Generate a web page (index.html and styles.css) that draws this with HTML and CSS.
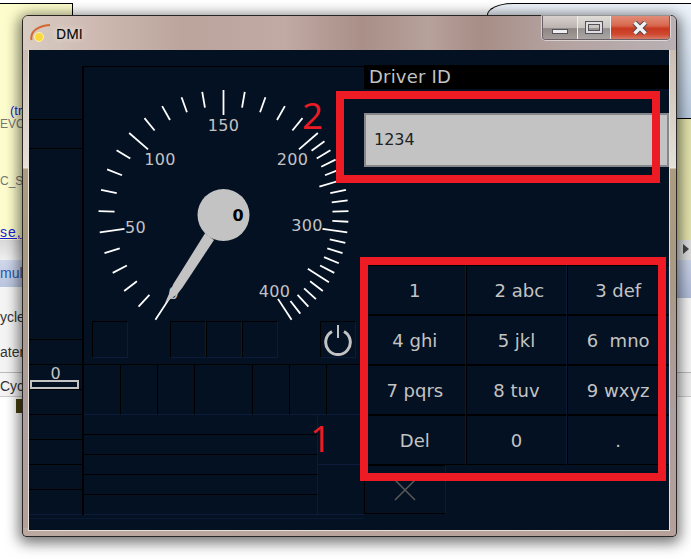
FILE: index.html
```html
<!DOCTYPE html>
<html lang="en">
<head>
<meta charset="utf-8">
<title>DMI</title>
<link rel="stylesheet" href="styles.css">
</head>
<body>
<div class="desktop">
  <div class="bg-left">
    <div class="note">
      <div class="nl blue ind">(tr</div>
      <div class="nl gray evc">EVC_</div>
      <div class="nl gray gap1">C_Sy</div>
      <div class="nl blue under gap2">se,</div>
    </div>
    <div class="band-gray"></div>
    <div class="band-tab">mula</div>
    <div class="band-white">
      <div class="wl">ycle</div>
      <div class="wl">ater</div>
    </div>
    <div class="band-row">Cycl</div>
    <div class="band-end"><span class="mini-icon"></span></div>
  </div>

  <div class="bg-right">
    <div class="sky"></div>
    <div class="r-yellow"></div>
    <div class="r-gray"><span class="r-arrow"></span></div>
    <div class="r-tab"></div>
    <div class="r-white"></div>
    <div class="r-row"></div>
  </div>

  <div class="window">
    <div class="titlebar">
      <svg class="app-icon" width="22" height="20" viewBox="0 0 22 20">
        <path class="swoosh" d="M1.500 16C0 7 8 2 20 1" />
        <circle class="dot" cx="9" cy="13" r="4.500" />
      </svg>
      <span class="title">DMI</span>
      <div class="caption">
        <div class="cap cap-min"><span class="glyph-min"></span></div>
        <div class="cap cap-max"><span class="glyph-max"></span></div>
        <div class="cap cap-close">
          <svg width="16" height="14" viewBox="0 0 16 14"><path class="x-glyph" d="M2.500 1.500L13.500 12.500M13.500 1.500L2.500 12.500"/><path class="x-core" d="M2.500 1.500L13.500 12.500M13.500 1.500L2.500 12.500"/></svg>
        </div>
      </div>
    </div>

    <div class="client">
      <div class="left">
        <div class="col-a">
          <div class="ca h54"></div>
          <div class="ca h29"></div>
          <div class="ca h191"></div>
          <div class="ca h25"></div>
          <div class="ca h25 speedcell">
            <span class="bar-num">0</span>
            <span class="bar"></span>
          </div>
          <div class="ca h25"></div>
          <div class="ca h25"></div>
          <div class="ca h25"></div>
          <div class="ca h25"></div>
          <div class="ca h25 ca-last"></div>
        </div>
        <div class="col-b">
          <svg class="gauge" width="280" height="255" viewBox="0 0 280 255">
            <defs>
              <line id="s" class="tick" x1="0" y1="-125" x2="0" y2="-109"/>
              <line id="l" class="tick" x1="0" y1="-125" x2="0" y2="-100"/>
            </defs>
            <g transform="translate(139.5 149)">
              <use href="#l" transform="rotate(-147)"/>
              <use href="#s" transform="rotate(-137.2)"/>
              <use href="#s" transform="rotate(-127.4)"/>
              <use href="#s" transform="rotate(-117.6)"/>
              <use href="#s" transform="rotate(-107.8)"/>
              <use href="#l" transform="rotate(-98)"/>
              <use href="#s" transform="rotate(-88.2)"/>
              <use href="#s" transform="rotate(-78.4)"/>
              <use href="#s" transform="rotate(-68.6)"/>
              <use href="#s" transform="rotate(-58.8)"/>
              <use href="#l" transform="rotate(-49)"/>
              <use href="#s" transform="rotate(-39.2)"/>
              <use href="#s" transform="rotate(-29.4)"/>
              <use href="#s" transform="rotate(-19.6)"/>
              <use href="#s" transform="rotate(-9.8)"/>
              <use href="#l" transform="rotate(0)"/>
              <use href="#s" transform="rotate(9.8)"/>
              <use href="#s" transform="rotate(19.6)"/>
              <use href="#s" transform="rotate(29.4)"/>
              <use href="#s" transform="rotate(39.2)"/>
              <use href="#l" transform="rotate(49)"/>
              <use href="#s" transform="rotate(53.9)"/>
              <use href="#s" transform="rotate(58.8)"/>
              <use href="#s" transform="rotate(63.7)"/>
              <use href="#s" transform="rotate(68.6)"/>
              <use href="#l" transform="rotate(73.5)"/>
              <use href="#s" transform="rotate(78.4)"/>
              <use href="#s" transform="rotate(83.3)"/>
              <use href="#s" transform="rotate(88.2)"/>
              <use href="#s" transform="rotate(93.1)"/>
              <use href="#l" transform="rotate(98)"/>
              <use href="#s" transform="rotate(102.9)"/>
              <use href="#s" transform="rotate(107.8)"/>
              <use href="#s" transform="rotate(112.7)"/>
              <use href="#s" transform="rotate(117.6)"/>
              <use href="#l" transform="rotate(122.5)"/>
              <use href="#s" transform="rotate(127.4)"/>
              <use href="#s" transform="rotate(132.3)"/>
              <use href="#s" transform="rotate(137.2)"/>
              <use href="#s" transform="rotate(142.1)"/>
              <use href="#l" transform="rotate(147)"/>
              <text class="num" x="-50" y="84">0</text>
              <text class="num" x="-88" y="18">50</text>
              <text class="num" x="-63.500" y="-50">100</text>
              <text class="num" x="0" y="-84">150</text>
              <text class="num" x="69" y="-50">200</text>
              <text class="num" x="83.500" y="16">300</text>
              <text class="num" x="51" y="82">400</text>
              <circle class="hub" r="26"/>
              <polygon class="hub" points="-18.500,18.300 -9.500,25 -40.800,72.300 -46,79 -58.500,88 -50.200,69"/>
              <text class="num-hub" x="14.500" y="6">0</text>
            </g>
          </svg>
          <div class="squares">
            <div class="sq sq-gap"></div>
            <div class="sq"></div>
            <div class="sq"></div>
            <div class="sq sq-gap"></div>
            <div class="sq power">
              <svg width="30" height="32" viewBox="0 0 30 32">
                <path class="pw" d="M9 7.500A12.300 12.300 0 1 0 21 7.500"/>
                <line class="pw-line" x1="15" y1="1" x2="15" y2="14"/>
              </svg>
            </div>
          </div>
          <div class="cells">
            <div class="cell"></div><div class="cell"></div><div class="cell"></div>
            <div class="cell wide"></div><div class="cell"></div><div class="cell"></div><div class="cell"></div>
          </div>
          <div class="lower">
            <div class="rows">
              <div class="row"></div><div class="row"></div><div class="row"></div><div class="row"></div><div class="row row-last"></div>
            </div>
            <div class="side">
              <div class="side-cell"></div>
              <div class="side-cell"></div>
            </div>
          </div>
          <div class="foot-line"></div>
        </div>
      </div>

      <div class="right">
        <div class="win-title">Driver ID</div>
        <div class="field">1234</div>
        <div class="keypad">
          <div class="key">1</div>
          <div class="key">&nbsp;2 abc</div>
          <div class="key">3 def</div>
          <div class="key">4 ghi</div>
          <div class="key">5 jkl</div>
          <div class="key">6&nbsp; mno</div>
          <div class="key">7 pqrs</div>
          <div class="key">8 tuv</div>
          <div class="key">9 wxyz</div>
          <div class="key">Del</div>
          <div class="key">0</div>
          <div class="key">.</div>
        </div>
        <div class="close-row">
          <div class="close-btn">
            <svg width="22" height="22" viewBox="0 0 22 22"><path class="close-x" d="M1 1L21 21M21 1L1 21"/></svg>
          </div>
        </div>
      </div>
    </div>
  </div>

  <div class="red-box box-two"></div>
  <div class="red-box box-one"></div>
  <span class="red-num num-two">2</span>
  <span class="red-num num-one">1</span>
</div>
</body>
</html>
```
FILE: styles.css
```css
* { box-sizing: border-box; }
html, body { margin: 0; padding: 0; }
body { background: #fff; }

.desktop {
  position: relative;
  width: 691px;
  height: 559px;
  overflow: hidden;
  background: #fff;
  font-family: "Liberation Sans", sans-serif;
}

/* Background windows behind the DMI */
.bg-left {
  position: absolute;
  left: 0;
  top: 3px;
  width: 73px;
  display: flex;
  flex-direction: column;
  font-size: 13px;
  color: #333;
}
.note {
  height: 237px;
  background: #fcfccc;
  border-top: 1px solid #000;
  border-right: 1px solid #000;
  padding-top: 102px;
}
.nl { height: 10px; line-height: 10px; white-space: nowrap; }
.blue { color: #1a1ae0; }
.gray { color: #777; font-size: 12px; }
.ind { padding-left: 10px; font-size: 13px; }
.evc { margin-top: 3px; }
.gap1 { margin-top: 47px; }
.gap2 { margin-top: 41px; letter-spacing: 1px; font-size: 14px; }
.under { text-decoration: underline; }
.band-gray { height: 20px; background: linear-gradient(#d8d8d8, #f0f0f0); }
.band-tab {
  height: 27px;
  background: linear-gradient(#d0d8ec, #b9c4de);
  color: #2358b0;
  font-size: 14px;
  line-height: 27px;
}
.band-white { height: 86px; background: #f4f4f4; padding-top: 18px; border-bottom: 1px solid #bbb; }
.wl { height: 35px; line-height: 24px; font-size: 14px; white-space: nowrap; }
.band-row { height: 24px; line-height: 26px; font-size: 14px; background: #f5f5f5; border-bottom: 1px solid #ccc; }
.band-end { height: 40px; background: #fff; padding: 2px 0 0 16px; }
.mini-icon { display: block; width: 6px; height: 14px; background: #4a4212; }

.bg-right {
  position: absolute;
  left: 487px;
  top: 3px;
  width: 204px;
  display: flex;
  flex-direction: column;
}
.sky {
  height: 115px;
  background: linear-gradient(#eef4fb, #b9cbe0);
  border-top: 1px solid #000;
  border-left: 1px solid #000;
  border-top-left-radius: 26px 12px;
}
.r-yellow { height: 122px; background: #e2e2ac; border-top: 1px solid #000; }
.r-gray { height: 20px; background: #dcdcdc; position: relative; }
.r-arrow {
  position: absolute;
  right: 2px;
  top: 4px;
  border-left: 6px solid #444;
  border-top: 5px solid transparent;
  border-bottom: 5px solid transparent;
}
.r-tab { height: 38px; background: linear-gradient(#c9d2e8, #b0bcd8); }
.r-white { height: 75px; background: #f6f6f6; border-bottom: 1px solid #bbb; }
.r-row { height: 24px; background: #f0f0f0; border-bottom: 1px solid #ccc; }

/* DMI window */
.window {
  position: absolute;
  left: 22px;
  top: 15px;
  width: 655px;
  height: 522px;
  padding: 0 7px 7px 6px;
  border: 1px solid #2a2624;
  border-radius: 6px 6px 4px 4px;
  box-shadow: 0 3px 14px 3px rgba(0, 0, 0, .55);
  background:
    linear-gradient(90deg, #bba8a0 0, #b5a09a 100%) bottom / 100% 8px no-repeat,
    linear-gradient(#c4b3a8 0, #e4e0d8 150px, #ece8e2 152px, #ac9c80 153px, #a89a82 240px, #ad9ea0 400px, #b4a098 100%);
}
.titlebar {
  height: 34px;
  margin: 0 -7px 0 -6px;
  padding-left: 7px;
  display: flex;
  align-items: center;
  position: relative;
  background: linear-gradient(90deg, #d8ccc2 0, #cdb8b0 12%, #baa49c 25%, #c0aaa3 40%, #a98f87 52%, #b7a19b 62%, #a78e86 70%, #b4a2a0 82%, #b8b0b4 100%);
  border-radius: 5px 5px 0 0;
}
.app-icon { margin-right: 4px; margin-top: 2px; }
.swoosh { fill: none; stroke: #d2672f; stroke-width: 2; }
.dot { fill: #fbd83a; stroke: #fff4b0; stroke-width: 1; }
.title {
  font-family: "Open Sans", sans-serif;
  font-size: 14px;
  color: #000;
  text-shadow: 0 0 6px #fff;
  -webkit-text-stroke: .2px #000;
}
.caption {
  position: absolute;
  right: 6px;
  top: 0;
  height: 24px;
  display: flex;
  border: 1px solid #6a6268;
  border-top: 0;
  border-radius: 0 0 4px 4px;
  overflow: hidden;
  box-shadow: 0 0 0 1px rgba(255, 255, 255, .5);
}
.cap { display: flex; align-items: center; justify-content: center; border-right: 1px solid #eee; }
.cap-min { width: 35px; background: linear-gradient(#d8d0cc 0, #bbb4b0 50%, #8e8684 55%, #a39b98 100%); }
.cap-max { width: 33px; background: linear-gradient(#e0dcd8 0, #c8c4c0 50%, #949090 55%, #aaa6a4 100%); }
.cap-close { width: 58px; border-right: 0; background: linear-gradient(#e08c78 0, #d86a50 40%, #c8381f 55%, #d04a30 80%, #d87a68 100%); }
.glyph-min { display: block; width: 16px; height: 5px; background: #eee; border: 1px solid #55505a; margin-top: 8px; }
.glyph-max { display: block; width: 18px; height: 13px; border: 1px solid #55505a; box-shadow: inset 0 0 0 2px #dedede, inset 0 0 0 3px #55505a; }
.x-glyph { fill: none; stroke: #4c4650; stroke-width: 5.500; }
.x-core { fill: none; stroke: #f2f2f2; stroke-width: 3.500; }

.client {
  width: 640px;
  height: 480px;
  display: flex;
  background: #031122;
  box-shadow: 0 0 0 1px #e6dfd8;
}
.left { width: 335px; padding-top: 16px; display: flex; }

.col-a { width: 55px; border-right: 2px solid #000; height: 449px; }
.ca { border-bottom: 1px solid #000; }
.ca-last { border-bottom-color: #0c1b3a; }
.h54 { height: 54px; }
.h29 { height: 29px; }
.h191 { height: 191px; }
.h25 { height: 25px; }
.speedcell { display: flex; flex-direction: column; align-items: center; padding-top: 2px; color: #c3c3c3; font-family: "DejaVu Sans", sans-serif; font-size: 16px; }
.bar-num { line-height: 13px; }
.bar { display: block; width: 49px; height: 9px; border: 2px solid #c3c3c3; margin-right: 3px; flex: none; }

.col-b { width: 280px; border-top: 1px solid #000; }
.gauge { display: block; margin-top: -1px; }
.tick { stroke: #fff; stroke-width: 1.800; }
.num { font-family: "DejaVu Sans", sans-serif; font-size: 16px; letter-spacing: .3px; fill: #c3c3c3; text-anchor: middle; }
.num-hub { font-family: "DejaVu Sans", sans-serif; font-size: 16px; font-weight: 700; fill: #000; text-anchor: middle; }
.hub { fill: #c3c3c3; }

.squares { height: 44px; display: flex; padding-left: 8px; align-items: flex-start; border-bottom: 1px solid #000; }
.sq { width: 36px; height: 37px; border: 1px solid #000; border-right-color: #0c1b3a; border-bottom-color: #0c1b3a; flex: none; }
.sq-gap { margin-right: 42px; }
.power { display: flex; align-items: center; justify-content: center; }
.pw { fill: none; stroke: #c3c3c3; stroke-width: 3; }
.pw-line { stroke: #c3c3c3; stroke-width: 2; }

.cells { height: 50px; display: flex; }
.cell { width: 37px; border-right: 1px solid #000; border-bottom: 1px solid #0c1b3a; }
.wide { width: 59px; }
.lower { display: flex; height: 100px; }
.rows { width: 234px; }
.row { height: 20px; border-bottom: 1px solid #000; border-right: 1px solid #0c1b3a; }
.row-last { border-bottom-color: #0c1b3a; }
.side { width: 46px; }
.side-cell { height: 50px; border-bottom: 1px solid #0c1b3a; }
.foot-line { height: 1px; margin: 3px 0 0 -55px; background: #0a1830; }

.right { width: 305px; padding-top: 15px; display: flex; flex-direction: column; }
.win-title {
  height: 24px;
  background: #000;
  color: #c3c3c3;
  font-family: "DejaVu Sans", sans-serif;
  font-size: 18px;
  letter-spacing: .2px;
  line-height: 24px;
  padding-left: 5px;
}
.field {
  height: 54px;
  margin-top: 24px;
  background: #c3c3c3;
  border: 2px solid #85878a;
  color: #222;
  font-family: "DejaVu Sans", sans-serif;
  font-size: 16px;
  line-height: 50px;
  padding-left: 8px;
}
.keypad { margin-top: 98px; display: grid; grid-template-columns: repeat(3, 1fr); grid-auto-rows: 50px; }
.key {
  display: flex;
  align-items: center;
  justify-content: center;
  color: #c3c3c3;
  font-family: "DejaVu Sans", sans-serif;
  font-size: 18px;
  white-space: pre;
  border: 1px solid #000;
  border-right-color: #0c1b3a;
}
.close-row { height: 50px; display: flex; }
.close-btn { width: 82px; height: 49px; display: flex; align-items: center; justify-content: center; border: 1px solid #000; border-right-color: #0c1b3a; }
.close-x { fill: none; stroke: #5a5a5a; stroke-width: 1.500; }

/* Annotations drawn over the screenshot */
.red-box { position: absolute; border: 8px solid #ed1c24; }
.box-one { left: 360px; top: 257px; width: 306px; height: 224px; }
.box-two { left: 336px; top: 91px; width: 324px; height: 92px; }
.red-num { position: absolute; color: #ed1c24; font-family: "Open Sans", sans-serif; font-size: 37px; line-height: 40px; }
.num-two { left: 302px; top: 95px; }
.num-one { left: 310px; top: 418px; }
```
